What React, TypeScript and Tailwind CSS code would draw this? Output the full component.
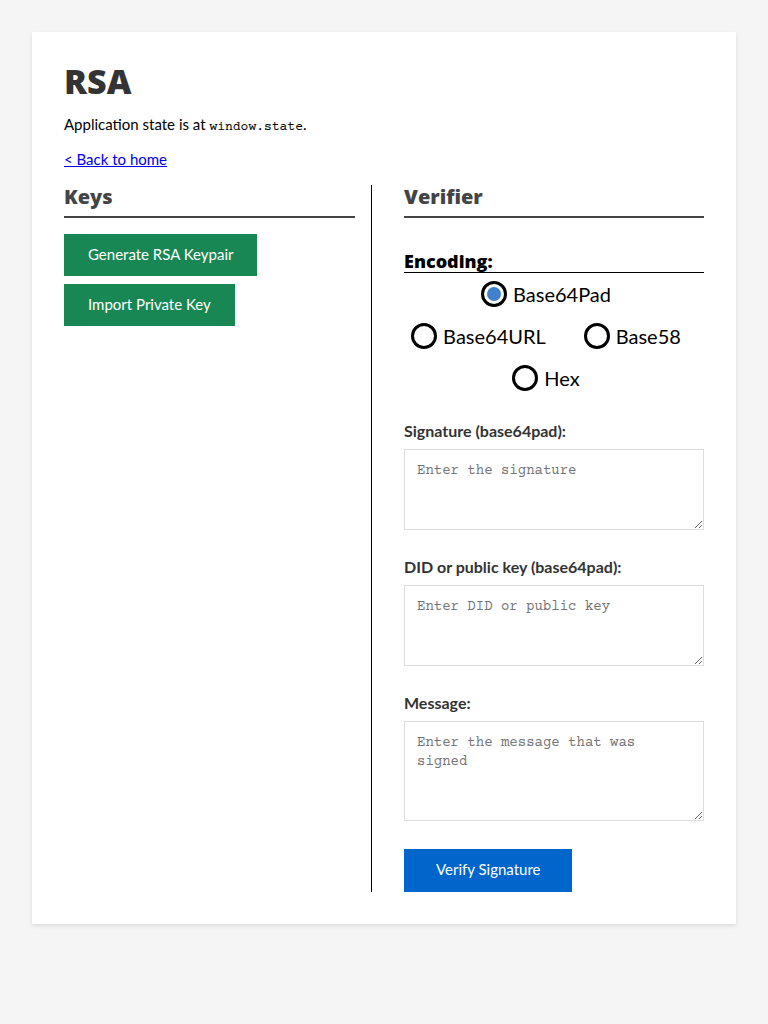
import { useState } from 'react'

const encodings = ['Base64Pad', 'Base64URL', 'Base58', 'Hex']

function Field({ id, label, placeholder, height }: { id: string; label: string; placeholder: string; height: string }) {
  return (
    <div className="mb-7 flex flex-col gap-2.5">
      <label htmlFor={id} className="text-base leading-[17px] font-bold text-[#333]">{label}</label>
      <textarea
        id={id}
        placeholder={placeholder}
        className={`block w-full resize-y border border-[#ddd] bg-white p-3 font-['Courier_Prime','Liberation_Mono',monospace] text-[14px] leading-[19px] text-black placeholder:text-[#757575] ${height}`}
      />
    </div>
  )
}

function SectionTitle({ children, className }: { children: string; className: string }) {
  return (
    <h2 className={`border-b-2 border-[#444] pb-2 font-['Gill_Sans','Open_Sans',sans-serif] text-[20px] leading-[23px] font-extrabold text-[#444] ${className}`}>
      {children}
    </h2>
  )
}

export default function App() {
  const [encoding, setEncoding] = useState('Base64Pad')

  return (
    <div className="min-h-screen bg-[#f5f5f5] p-8 font-['Gill_Sans','Gill_Sans_MT',Lato,sans-serif] text-[15px] text-black">
      <main className="bg-white p-8 shadow-[0_2px_4px_rgba(0,0,0,0.1)]">
        <h1 className="font-['Gill_Sans','Open_Sans',sans-serif] text-[34px] leading-[34px] font-extrabold text-[#333]">RSA</h1>
        <p className="mt-4 leading-5">
          Application state is at <code className="font-['Courier_Prime','Liberation_Mono',monospace] text-[13px]">window.state</code>.
        </p>
        <p className="mt-3 leading-5">
          <a href="/" className="text-[#0000ee] underline">&lt; Back to home</a>
        </p>

        <div className="mt-4 grid grid-cols-[77fr_83fr]">
          <section className="border-r border-black pr-4">
            <SectionTitle className="mb-4">Keys</SectionTitle>
            <div className="flex flex-col items-start gap-2">
              <button type="button" className="h-[42px] bg-[#198754] px-6 pb-0.5 text-white">Generate RSA Keypair</button>
              <button type="button" className="h-[42px] bg-[#198754] px-6 pb-0.5 text-white">Import Private Key</button>
            </div>
          </section>

          <section className="pl-8">
            <SectionTitle className="mb-8">Verifier</SectionTitle>
            <form onSubmit={(e) => e.preventDefault()}>
              <fieldset className="mb-[27px]">
                <legend className="w-full border-b border-black font-['Gill_Sans','Open_Sans',sans-serif] text-[18px] leading-[22px] font-extrabold">Encoding:</legend>
                <div className="flex flex-wrap justify-center gap-x-[22px] gap-y-2 pt-1">
                  {encodings.map((name) => (
                    <label key={name} className="flex h-[34px] items-center gap-1.5 pr-4 text-[20px]">
                      <input
                        type="radio"
                        name="encoding"
                        value={name}
                        checked={encoding === name}
                        onChange={() => setEncoding(name)}
                        className="grid size-[26px] shrink-0 appearance-none place-items-center rounded-full border-3 border-black bg-white before:size-3.5 before:rounded-full checked:before:bg-[#4080cc]"
                      />
                      {name}
                    </label>
                  ))}
                </div>
              </fieldset>
              <Field id="signature" label="Signature (base64pad):" placeholder="Enter the signature" height="h-[81px]" />
              <Field id="public-key" label="DID or public key (base64pad):" placeholder="Enter DID or public key" height="h-[81px]" />
              <Field id="message" label="Message:" placeholder="Enter the message that was signed" height="h-[100px]" />
              <button type="submit" className="h-[43px] bg-[#0066cc] px-8 pb-0.5 text-white">Verify Signature</button>
            </form>
          </section>
        </div>
      </main>
    </div>
  )
}
